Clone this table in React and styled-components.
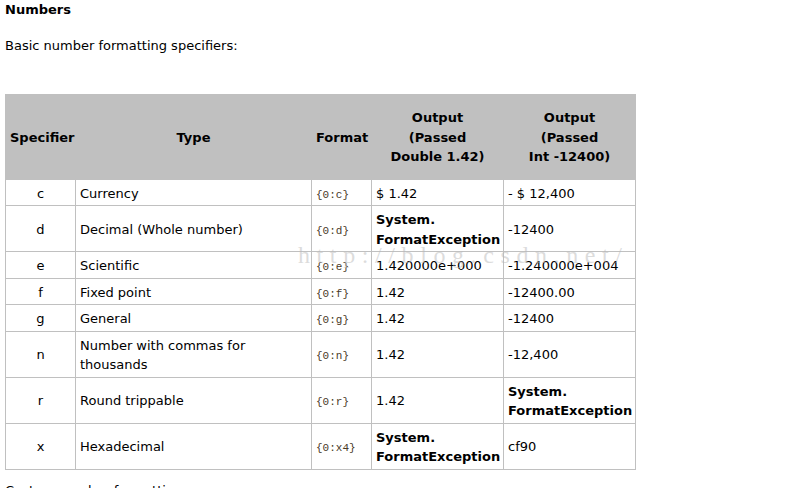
import React from "react";
import styled, { createGlobalStyle } from "styled-components";

const Global = createGlobalStyle`
  html, body { margin: 0; padding: 0; background: #fff; }
  body {
    font-family: "DejaVu Sans", Verdana, sans-serif;
    font-size: 13px;
    line-height: 19.5px;
    color: #000;
  }
`;

const Page = styled.div`
  position: relative;
  padding: 0 5px;
`;

const Title = styled.h4`
  margin: 0;
  font-size: 13px;
  font-weight: bold;
  line-height: 19.5px;
`;

const Para = styled.p`
  margin: ${(p) => p.$top}px 0 0;
`;

const Table = styled.table`
  margin-top: 39px;
  width: 631px;
  border-collapse: collapse;
  table-layout: fixed;
  border: 1px solid #c0c0c0;
`;

const Th = styled.th`
  background: #c0c0c0;
  font-weight: bold;
  padding: 13px 4px 12px;
  text-align: ${(p) => p.$align || "center"};
  vertical-align: middle;
  border: 1px solid #c0c0c0;
`;

const Td = styled.td`
  border: 1px solid #c0c0c0;
  padding: 4px 4px 2px;
  vertical-align: middle;
  text-align: ${(p) => (p.$center ? "center" : "left")};
  font-weight: ${(p) => (p.$bold ? "bold" : "normal")};
`;

const Code = styled.code`
  font-family: "Liberation Mono", "Courier New", monospace;
  font-size: 11px;
  line-height: 1;
  color: #4a3a28;
`;

const Watermark = styled.div`
  position: absolute;
  left: 298px;
  top: 241px;
  font-family: "Liberation Serif", "Times New Roman", serif;
  font-size: 24px;
  line-height: 28px;
  letter-spacing: 6.6px;
  color: rgba(185, 185, 185, 0.5);
  pointer-events: none;
  white-space: nowrap;
`;

const rows = [
  ["c", "Currency", "{0:c}", "$ 1.42", "- $ 12,400"],
  ["d", "Decimal (Whole number)", "{0:d}", ["System.", "FormatException"], "-12400"],
  ["e", "Scientific", "{0:e}", "1.420000e+000", "-1.240000e+004"],
  ["f", "Fixed point", "{0:f}", "1.42", "-12400.00"],
  ["g", "General", "{0:g}", "1.42", "-12400"],
  ["n", "Number with commas for thousands", "{0:n}", "1.42", "-12,400"],
  ["r", "Round trippable", "{0:r}", "1.42", ["System.", "FormatException"]],
  ["x", "Hexadecimal", "{0:x4}", ["System.", "FormatException"], "cf90"],
];

const Out = ({ v }) =>
  Array.isArray(v) ? (
    <Td $bold>
      {v[0]}
      <br />
      {v[1]}
    </Td>
  ) : (
    <Td>{v}</Td>
  );

export default function App() {
  return (
    <>
      <Global />
      <Page>
        <Title>Numbers</Title>
        <Para $top={16}>Basic number formatting specifiers:</Para>
        <Table>
          <colgroup>
            <col style={{ width: 70 }} />
            <col style={{ width: 236 }} />
            <col style={{ width: 60 }} />
            <col style={{ width: 132 }} />
            <col style={{ width: 132 }} />
          </colgroup>
          <thead>
            <tr>
              <Th $align="left">Specifier</Th>
              <Th>Type</Th>
              <Th>Format</Th>
              <Th>
                Output
                <br />
                (Passed
                <br />
                Double 1.42)
              </Th>
              <Th>
                Output
                <br />
                (Passed
                <br />
                Int -12400)
              </Th>
            </tr>
          </thead>
          <tbody>
            {rows.map((r) => (
              <tr key={r[0]}>
                <Td $center>{r[0]}</Td>
                <Td>{r[1]}</Td>
                <Td>
                  <Code>{r[2]}</Code>
                </Td>
                <Out v={r[3]} />
                <Out v={r[4]} />
              </tr>
            ))}
          </tbody>
        </Table>
        <Para $top={11}>Custom number formatting:</Para>
        <Watermark>http://blog.csdn.net/</Watermark>
      </Page>
    </>
  );
}
